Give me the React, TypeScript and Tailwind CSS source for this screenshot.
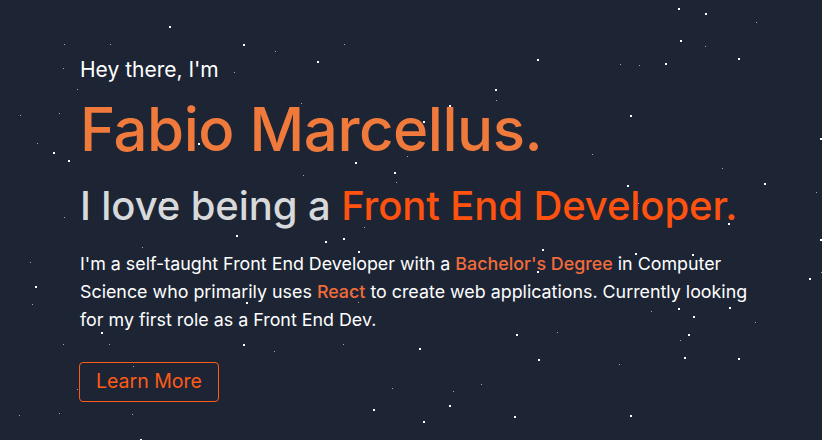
import React from 'react';

// [x, y, size]
const stars: [number, number, number][] = [
  [169, 26, 2], [64, 44, 1], [110, 44, 1], [243, 44, 2], [63, 68, 1], [234, 72, 1],
  [77, 89, 1], [20, 115, 1], [59, 113, 1], [37, 143, 1], [53, 152, 2], [68, 160, 2],
  [198, 143, 2], [162, 199, 2], [64, 217, 1],
  [275, 51, 1], [344, 44, 1], [317, 61, 2], [537, 59, 2], [495, 89, 2], [496, 100, 1],
  [449, 105, 2], [301, 103, 1], [423, 121, 2], [407, 156, 1], [355, 162, 2], [303, 175, 1],
  [394, 172, 2], [396, 182, 1], [347, 210, 1],
  [678, 8, 2], [705, 13, 2], [756, 22, 1], [680, 40, 2], [705, 46, 1], [738, 58, 2],
  [620, 64, 1], [639, 65, 1], [665, 63, 2], [630, 115, 2], [820, 138, 2], [592, 154, 1],
  [722, 168, 1], [764, 183, 2], [627, 185, 2], [816, 192, 1], [602, 201, 1], [638, 203, 1],
  [695, 215, 2],
  [236, 235, 2], [142, 247, 1], [30, 262, 1], [35, 286, 2], [32, 304, 1], [246, 302, 2],
  [101, 332, 2], [63, 344, 1], [109, 344, 1], [243, 344, 2], [133, 366, 1], [77, 389, 1],
  [19, 415, 1], [59, 413, 1], [132, 414, 1], [140, 439, 2],
  [325, 241, 2], [343, 238, 2], [364, 227, 1], [358, 251, 2], [542, 249, 2], [537, 271, 2],
  [352, 293, 1], [358, 302, 1], [516, 334, 2], [343, 344, 1], [274, 351, 1], [419, 348, 2],
  [538, 359, 2], [392, 388, 1], [453, 391, 1], [481, 384, 1], [449, 405, 2], [373, 409, 2],
  [514, 416, 2], [423, 421, 2],
  [728, 223, 2], [820, 239, 2], [635, 253, 2], [692, 254, 2], [809, 278, 2], [821, 272, 1],
  [651, 311, 1], [678, 308, 2], [729, 307, 2], [693, 316, 2], [755, 322, 1], [557, 332, 1],
  [688, 334, 2], [680, 340, 1], [684, 357, 2], [738, 358, 2], [619, 364, 1], [630, 415, 2],
];

export default function App() {
  return (
    <div className="relative w-[822px] h-[440px] overflow-hidden bg-[#1d2535] font-['Inter','Noto_Sans',sans-serif]">
      <div className="absolute inset-0 pointer-events-none">
        {stars.map(([x, y, s], i) => (
          <span
            key={i}
            className={s > 1 ? 'absolute bg-white' : 'absolute bg-white/60'}
            style={{ left: x, top: y, width: s, height: s }}
          />
        ))}
      </div>

      <section className="relative pl-20 pt-[56px]">
        <p className="text-[21px] leading-7 text-white">Hey there, I'm</p>
        <h1 className="mt-[15px] text-6xl leading-none font-medium tracking-[-0.5px] text-[#f0793c]">
          Fabio Marcellus.
        </h1>
        <h2 className="mt-[27px] text-[40px] leading-none font-medium tracking-[-0.1px] text-[#d8d9db]">
          I love being a <span className="text-[#ff520f]">Front End Developer.</span>
        </h2>
        <p className="mt-6 max-w-[690px] text-[17.85px] leading-7 text-white">
          I'm a self-taught Front End Developer with a{' '}
          <span className="font-medium text-[#f26b3a]">Bachelor's Degree</span> in Computer
          Science who primarily uses <span className="font-medium text-[#f26b3a]">React</span> to
          create web applications. Currently looking for my first role as a Front End Dev.
        </p>
        <button className="mt-7 -ml-px border border-[#ff5a16] rounded-sm px-4 h-10 text-[19.5px] text-[#ff5a16]">
          Learn More
        </button>
      </section>
    </div>
  );
}
